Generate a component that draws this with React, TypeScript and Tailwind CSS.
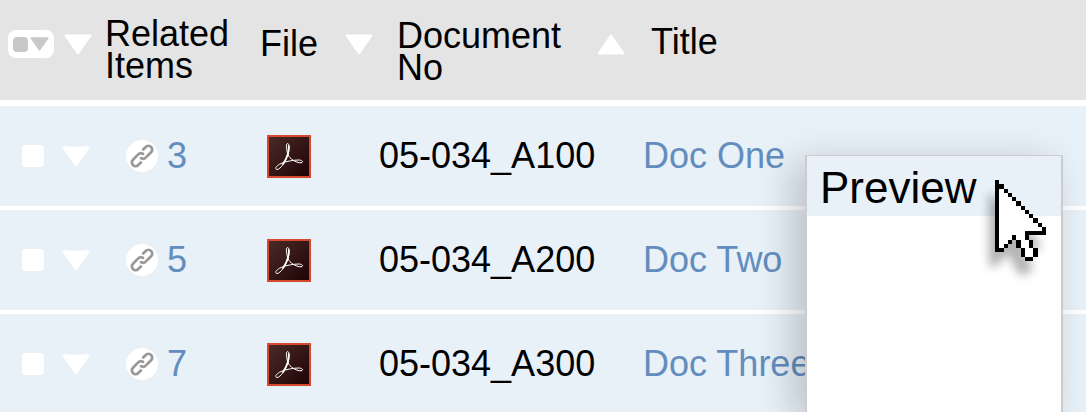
import { clsx } from 'clsx'

const DOCS = [
  { related: 3, no: '05-034_A100', title: 'Doc One' },
  { related: 5, no: '05-034_A200', title: 'Doc Two' },
  { related: 7, no: '05-034_A300', title: 'Doc Three' },
]

/* X = outline, . = fill */
const POINTER = [
  'X',
  'XX',
  'X.X',
  'X..X',
  'X...X',
  'X....X',
  'X.....X',
  'X......X',
  'X.......X',
  'X........X',
  'X.........X',
  'X..........X',
  'X......XXXXX',
  'X...X..X',
  'X..X X..X',
  'X.X  X..X',
  'XX    X..X',
  '      X..X',
  '       XX',
]

/* ── Icons ───────────────────────────────────────────────────────────────── */
function Triangle({ up, className }: { up?: boolean; className?: string }) {
  return (
    <svg viewBox="0 0 28 21" className={className} aria-hidden>
      <path
        d={up ? 'M14 1.5 26.5 19.5H1.5Z' : 'M1.5 1.5H26.5L14 19.5Z'}
        fill="currentColor"
        stroke="currentColor"
        strokeWidth="2"
        strokeLinejoin="round"
      />
    </svg>
  )
}

function LinkIcon() {
  return (
    <svg viewBox="-16 -16 32 32" className="size-8 rounded-full bg-white text-[#999]" aria-hidden>
      <g transform="rotate(-45)" fill="none" stroke="currentColor" strokeWidth="2.8" strokeLinecap="round">
        <path d="M5.500 -3.800H9A3.800 3.800 0 0 1 9 3.800H1.500A3.800 3.800 0 0 1 -2.200 0.800" />
        <path d="M-5.500 3.800H-9A3.800 3.800 0 0 1 -9 -3.800H-1.500A3.800 3.800 0 0 1 2.200 -0.800" />
      </g>
    </svg>
  )
}

function PdfIcon() {
  return (
    <svg viewBox="0 0 44 43" className="block h-[43px] w-11" aria-hidden>
      <defs>
        <linearGradient id="pdf-bg" x1="0" y1="0" x2="1" y2="1">
          <stop offset="0" stopColor="#4a2a27" />
          <stop offset="1" stopColor="#1f0404" />
        </linearGradient>
      </defs>
      <rect width="44" height="43" fill="#d5492f" />
      <rect x="2" y="2" width="40" height="39" fill="url(#pdf-bg)" />
      <g fill="none" stroke="#fff" strokeLinecap="round">
        <path
          d="M21 20C19.500 15 18.500 9 20.500 8.500C23 8.500 22 16 21 19.500C19 26 13.500 34.500 10 34.500C7 34 9.500 30.500 14 28.500C20 26 27 25 32 25C36 25.200 36.500 27.500 34 27.800C29 28 22.500 23.500 21 20Z"
          strokeWidth="1"
        />
        <path d="M21.800 11C22 16 20 23 16 29" strokeWidth="1.700" />
      </g>
    </svg>
  )
}

function Pointer() {
  return (
    <svg
      viewBox="0 0 12 19"
      shapeRendering="crispEdges"
      className="pointer-events-none absolute top-6 left-[188px] h-[81px] w-[51px]
        overflow-visible drop-shadow-[-6px_14px_5px_rgba(0,0,0,0.3)]"
      aria-hidden
    >
      {POINTER.flatMap((row, y) =>
        [...row].map((c, x) =>
          c === ' ' ? null : (
            <rect key={`${x}-${y}`} x={x} y={y} width="1" height="1" fill={c === 'X' ? '#000' : '#fff'} />
          ),
        ),
      )}
    </svg>
  )
}

/* ── Controls ────────────────────────────────────────────────────────────── */
function ArrowButton({ label, up, className }: { label: string; up?: boolean; className?: string }) {
  return (
    <button type="button" aria-label={label} className={clsx('shrink-0 text-white', className)}>
      <Triangle up={up} className="block h-[21px] w-7" />
    </button>
  )
}

function DocRow({ related, no, title }: { related: number; no: string; title: string }) {
  return (
    <tr className="h-[104px] bg-[#e8f0f8] *:border-b-4 *:border-white">
      <td>
        <div className="flex items-center gap-[18px] pl-[22px]">
          <input
            type="checkbox"
            aria-label={`Select ${title}`}
            className="size-[22px] shrink-0 appearance-none rounded bg-white"
          />
          <ArrowButton label={`Actions for ${title}`} />
        </div>
      </td>
      <td>
        <a href="#related" className="flex items-center gap-[9px] pl-[26px] text-[#628dbd]">
          <LinkIcon />
          {related}
        </a>
      </td>
      <td className="pl-[17px]">
        <a href="#file" aria-label={`Open ${title}`} className="block w-11">
          <PdfIcon />
        </a>
      </td>
      <td className="pl-px">{no}</td>
      <td className="pl-px">
        <a href="#doc" className="text-[#628dbd]">{title}</a>
      </td>
    </tr>
  )
}

function ContextMenu() {
  return (
    <div
      role="menu"
      className="absolute top-[155px] bottom-0 left-[805px] w-[258px] border-x-2 border-t
        border-[#ccc] bg-white shadow-[-12px_8px_36px_rgba(0,0,0,0.2)]"
    >
      <button
        type="button"
        role="menuitem"
        className="block h-[60px] w-full bg-[#e8f0f8] pt-1 pl-[13px] text-left text-[44px] leading-none"
      >
        Preview
      </button>
      <Pointer />
    </div>
  )
}

export default function App() {
  return (
    <main
      className="relative h-screen overflow-hidden bg-white text-4xl text-black
        font-['Liberation_Sans',Arial,sans-serif]"
    >
      <table className="w-full table-fixed border-separate border-spacing-0 text-left whitespace-nowrap">
        <colgroup>
          <col className="w-[100px]" />
          <col className="w-[150px]" />
          <col className="w-32" />
          <col className="w-[264px]" />
          <col />
        </colgroup>
        <thead>
          <tr className="h-[106px] bg-[#e4e4e4] leading-8 *:border-b-6 *:border-white">
            <th className="font-normal">
              <div className="flex items-center gap-2.5 pb-3 pl-2">
                <button
                  type="button"
                  aria-label="Select rows"
                  className="flex h-7 w-[46px] shrink-0 items-center justify-center gap-0.5 rounded-lg
                    bg-white text-[#c8c8c8]"
                >
                  <span className="size-[15px] rounded bg-[#c8c8c8]" />
                  <Triangle className="h-[14px] w-[19px]" />
                </button>
                <ArrowButton label="Row actions" />
              </div>
            </th>
            <th className="pl-[5px] font-normal">
              Related
              <br />
              Items
            </th>
            <th className="font-normal">
              <div className="flex items-center gap-[27px] pb-3 pl-2.5">
                File
                <ArrowButton label="Sort by file" />
              </div>
            </th>
            <th className="font-normal">
              <div className="flex items-center gap-9 pl-[19px]">
                <span className="pt-1">
                  Document
                  <br />
                  No
                </span>
                <ArrowButton label="Sort by document number" up className="mb-3" />
              </div>
            </th>
            <th className="pb-4 pl-[9px] font-normal">Title</th>
          </tr>
        </thead>
        <tbody>
          {DOCS.map((doc) => (
            <DocRow key={doc.no} {...doc} />
          ))}
        </tbody>
      </table>

      <ContextMenu />
    </main>
  )
}
